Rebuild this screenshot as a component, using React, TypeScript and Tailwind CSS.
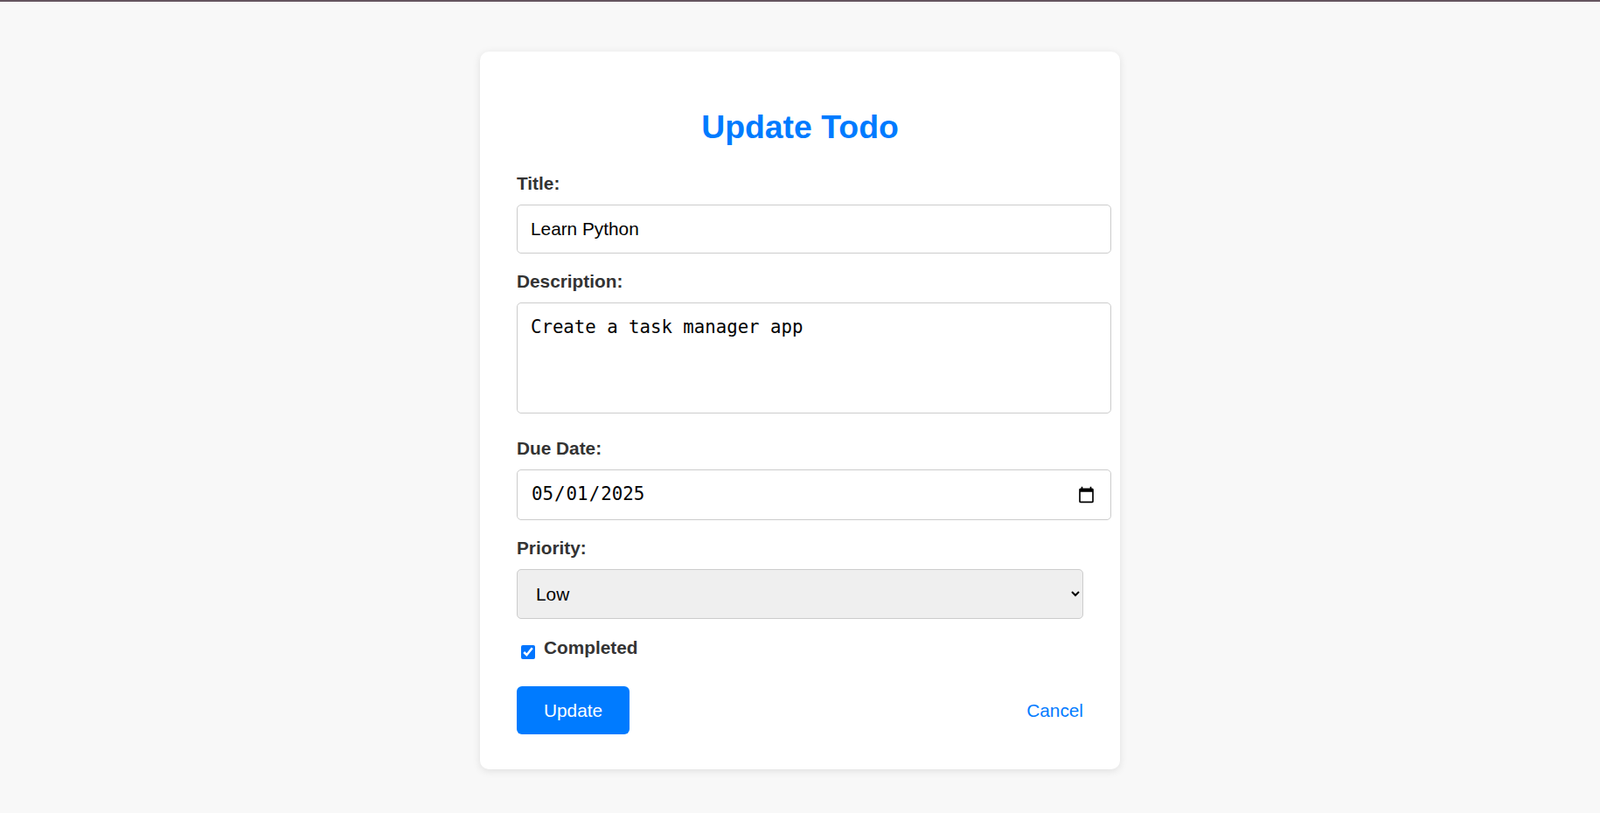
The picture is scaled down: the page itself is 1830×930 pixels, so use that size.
import { useState } from "react";

const labelCls = "block text-[20.8px] leading-[24px] font-bold text-[#333] mb-[12px]";
const boxCls =
  "block box-border w-[680px] border border-[#ccc] rounded-[5px] bg-white px-[15px] text-black outline-none";

export default function App() {
  const [title, setTitle] = useState("Learn Python");
  const [description, setDescription] = useState("Create a task manager app");
  const [dueDate, setDueDate] = useState("2025-05-01");
  const [priority, setPriority] = useState("low");
  const [completed, setCompleted] = useState(true);

  return (
    <div className="min-h-[930px] bg-[#f8f8f8] font-['Liberation_Sans',Arial,sans-serif]">
      <div className="h-[2px] bg-[#65555f]" />
      <div className="pt-[57px]">
        <div className="mx-auto w-[732px] box-border rounded-[10px] bg-white px-[42px] pt-[40px] pb-[40px] shadow-[0_2px_10px_rgba(0,0,0,0.1)]">
          <h2 className="mt-[25px] mb-[31px] text-center text-[37.4px] leading-[43px] font-bold text-[#007bff]">
            Update Todo
          </h2>

          <form onSubmit={(e) => e.preventDefault()}>
            <div className="mb-[20px]">
              <label className={labelCls}>Title:</label>
              <input
                type="text"
                value={title}
                onChange={(e) => setTitle(e.target.value)}
                className={`${boxCls} h-[56px] text-[20.8px]`}
              />
            </div>

            <div className="mb-[28px]">
              <label className={labelCls}>Description:</label>
              <textarea
                value={description}
                onChange={(e) => setDescription(e.target.value)}
                className={`${boxCls} h-[127px] resize-none pt-[15px] font-['DejaVu_Sans_Mono',monospace] text-[20.7px] leading-[24px]`}
              />
            </div>

            <div className="mb-[20px]">
              <label className={labelCls}>Due Date:</label>
              <input
                type="date"
                value={dueDate}
                onChange={(e) => setDueDate(e.target.value)}
                className={`${boxCls} h-[58px] font-['DejaVu_Sans_Mono',monospace] text-[20.8px]`}
              />
            </div>

            <div>
              <label className={labelCls}>Priority:</label>
              <select
                value={priority}
                onChange={(e) => setPriority(e.target.value)}
                className="block box-border h-[57px] w-full rounded-[5px] border border-[#ccc] bg-[#efefef] pl-[17px] pr-[4px] text-[20.8px] text-black"
              >
                <option value="low">Low</option>
                <option value="medium">Medium</option>
                <option value="high">High</option>
              </select>
            </div>

            <div className="mt-[21px] flex items-start h-[24px]">
              <input
                id="completed"
                type="checkbox"
                checked={completed}
                onChange={(e) => setCompleted(e.target.checked)}
                className="mt-[9px] ml-[5px] mr-[10px] h-[16px] w-[16px]"
              />
              <label htmlFor="completed" className="text-[20.8px] leading-[24px] font-bold text-[#333]">
                Completed
              </label>
            </div>

            <div className="mt-[32px] flex items-center justify-between">
              <button
                type="submit"
                className="h-[55px] rounded-[6px] bg-[#007bff] px-[31px] text-[20.8px] text-white"
              >
                Update
              </button>
              <a href="#" className="text-[20.8px] text-[#007bff]">
                Cancel
              </a>
            </div>
          </form>
        </div>
      </div>
    </div>
  );
}
